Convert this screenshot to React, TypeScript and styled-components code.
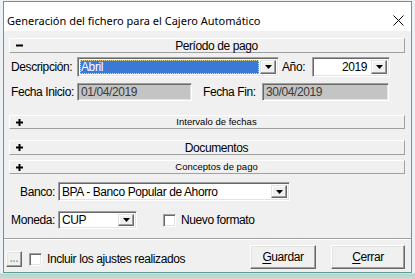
import styled, { createGlobalStyle } from "styled-components";

const ui = `"Liberation Sans", Arial, sans-serif`;

const GlobalStyle = createGlobalStyle`
  body {
    margin: 0;
    background: #eef1f4;
    font-family: ${ui};
  }
`;

const Desktop = styled.div`
  width: 415px;
  height: 279px;
  box-sizing: border-box;
  overflow: hidden;
  padding: 1px 0 0 3px;
  background: linear-gradient(to bottom, #eef1f4 0, #eef1f4 273px, #b8d3c8 274px, #c9ddd5 279px);
`;

const Window = styled.div`
  width: 409px;
  box-sizing: border-box;
  border: 1px solid #5a9c97;
  background: #f0f0f0;
`;

const TitleBar = styled.div`
  height: 29px;
  box-sizing: border-box;
  background: #fff;
  display: flex;
  align-items: center;
  justify-content: space-between;
  padding: 8px 7px 0 3px;
  font-family: "Noto Sans", "Liberation Sans", sans-serif;
  font-size: 11px;
  color: #000;
`;

const Client = styled.div`
  display: flex;
  flex-direction: column;
  padding: 7px 0 3px 0;
  font-size: 12px;
  letter-spacing: -0.4px;
`;

const Bar = styled.div<{ $h: number; $top: number }>`
  height: ${(p) => p.$h}px;
  margin: ${(p) => p.$top}px 6px 0 5px;
  box-sizing: border-box;
  display: flex;
  align-items: center;
  border: 1px solid;
  border-color: #fff #a0a0a0 #a0a0a0 #fff;
`;

const BarIcon = styled.div`
  width: 13px;
  padding-left: 6px;
  display: flex;
  align-items: center;
`;

const BarTitle = styled.div<{ $small?: boolean }>`
  flex: 1;
  text-align: center;
  color: #000;
  font-size: ${(p) => (p.$small ? "9.5px" : "12px")};
  letter-spacing: ${(p) => (p.$small ? "0" : "-0.4px")};
  line-height: 1;
`;

const Row = styled.div<{ $top: number; $h: number }>`
  display: flex;
  align-items: center;
  height: ${(p) => p.$h}px;
  margin-top: ${(p) => p.$top}px;
  padding-left: 7px;
`;

const Label = styled.div<{ $w: number; $right?: boolean; $ml?: number }>`
  width: ${(p) => p.$w}px;
  margin-left: ${(p) => p.$ml ?? 0}px;
  text-align: ${(p) => (p.$right ? "right" : "left")};
  padding-right: ${(p) => (p.$right ? 3 : 0)}px;
  box-sizing: border-box;
  color: #000;
  white-space: nowrap;
`;

const Sunken = styled.div<{ $w: number; $h: number; $bg?: string }>`
  width: ${(p) => p.$w}px;
  height: ${(p) => p.$h}px;
  box-sizing: border-box;
  display: flex;
  align-items: stretch;
  background: ${(p) => p.$bg ?? "#fff"};
  border: 1px solid;
  border-color: #a0a0a0 #fff #fff #a0a0a0;
  box-shadow: inset 1px 1px #696969, inset -1px -1px #e3e3e3;
  padding: 2px;
`;

const Value = styled.div<{ $right?: boolean; $sel?: boolean; $dim?: boolean }>`
  flex: 1;
  display: flex;
  align-items: center;
  justify-content: ${(p) => (p.$right ? "flex-end" : "flex-start")};
  padding: 0 ${(p) => (p.$right ? 4 : 1)}px 0 1px;
  color: ${(p) => (p.$sel ? "#fff" : p.$dim ? "#3a3a3a" : "#000")};
  background: ${(p) => (p.$sel ? "#3b79d6" : "transparent")};
  outline: ${(p) => (p.$sel ? "1px dotted #e8e0a0" : "none")};
  outline-offset: -1px;
  margin-right: ${(p) => (p.$sel ? 1 : 0)}px;
  white-space: nowrap;
  overflow: hidden;
`;

const DropButton = styled.div`
  width: 16px;
  box-sizing: border-box;
  display: flex;
  align-items: center;
  justify-content: center;
  background: #f0f0f0;
  border: 1px solid;
  border-color: #e3e3e3 #696969 #696969 #e3e3e3;
  box-shadow: inset -1px -1px #a0a0a0, inset 1px 1px #fff;
`;

const Check = styled.div<{ $ml: number }>`
  width: 13px;
  height: 13px;
  box-sizing: border-box;
  margin-left: ${(p) => p.$ml}px;
  margin-right: 5px;
  background: #fff;
  border: 1px solid;
  border-color: #a0a0a0 #fff #fff #a0a0a0;
  box-shadow: inset 1px 1px #696969, inset -1px -1px #e3e3e3;
`;

const Text = styled.span`
  color: #000;
  white-space: nowrap;
`;

const Separator = styled.div`
  margin-top: 9px;
  height: 0;
  border-top: 1px solid #a0a0a0;
  border-bottom: 1px solid #fff;
`;

const Footer = styled.div`
  display: flex;
  align-items: flex-end;
  margin-top: 5px;
  padding: 0 6px 0 2px;
  height: 24px;
`;

const Left = styled.div`
  flex: 1;
  display: flex;
  align-items: center;
  margin-bottom: 2px;
`;

const Raised = styled.div<{ $w: number; $h: number; $ml?: number }>`
  width: ${(p) => p.$w}px;
  height: ${(p) => p.$h}px;
  margin-left: ${(p) => p.$ml ?? 0}px;
  box-sizing: border-box;
  display: flex;
  align-items: center;
  justify-content: center;
  background: #f0f0f0;
  border: 1px solid;
  border-color: #fff #696969 #696969 #fff;
  box-shadow: inset -1px -1px #a0a0a0, inset 1px 1px #e3e3e3;
  color: #000;
  u {
    text-decoration: underline;
    text-underline-offset: 2px;
  }
`;

const Dots = styled.span`
  font-size: 10px;
  font-weight: bold;
  color: #9a9a9a;
  letter-spacing: 0;
  margin-top: -2px;
`;

function Arrow() {
  return (
    <svg width="7" height="4" viewBox="0 0 7 4">
      <path d="M0 0H7L3.5 4Z" fill="#000" />
    </svg>
  );
}

function Toggle({ open }: { open?: boolean }) {
  return (
    <svg width="7" height="7" viewBox="0 0 7 7">
      <rect x="0" y="2.5" width="7" height="2" fill="#000" />
      {!open && <rect x="2.5" y="0" width="2" height="7" fill="#000" />}
    </svg>
  );
}

function Combo({ w, h, value, right, sel }: { w: number; h: number; value: string; right?: boolean; sel?: boolean }) {
  return (
    <Sunken $w={w} $h={h}>
      <Value $right={right} $sel={sel}>{value}</Value>
      <DropButton>
        <Arrow />
      </DropButton>
    </Sunken>
  );
}

export default function App() {
  return (
    <>
      <GlobalStyle />
      <Desktop>
        <Window>
          <TitleBar>
            <span>Generación del fichero para el Cajero Automático</span>
            <svg width="11" height="11" viewBox="0 0 11 11">
              <path d="M0.5 0.5L10.5 10.5M10.5 0.5L0.5 10.5" stroke="#000" strokeWidth="1" />
            </svg>
          </TitleBar>
          <Client>
            <Bar $h={15} $top={0}>
              <BarIcon>
                <Toggle open />
              </BarIcon>
              <BarTitle>Período de pago</BarTitle>
            </Bar>

            <Row $top={4} $h={20}>
              <Label $w={66}>Descripción:</Label>
              <Combo w={202} h={20} value="Abril" sel />
              <Label $w={30} $ml={3}>Año:</Label>
              <Combo w={78} h={20} value="2019" right />
            </Row>

            <Row $top={6} $h={18}>
              <Label $w={66}>Fecha Inicio:</Label>
              <Sunken $w={115} $h={18} $bg="#c4c4c4">
                <Value $dim>01/04/2019</Value>
              </Sunken>
              <Label $w={59} $ml={11}>Fecha Fin:</Label>
              <Sunken $w={127} $h={18} $bg="#c4c4c4">
                <Value $dim>30/04/2019</Value>
              </Sunken>
            </Row>

            <Bar $h={14} $top={14}>
              <BarIcon>
                <Toggle />
              </BarIcon>
              <BarTitle $small>Intervalo de fechas</BarTitle>
            </Bar>
            <Bar $h={15} $top={11}>
              <BarIcon>
                <Toggle />
              </BarIcon>
              <BarTitle>Documentos</BarTitle>
            </Bar>
            <Bar $h={14} $top={5}>
              <BarIcon>
                <Toggle />
              </BarIcon>
              <BarTitle $small>Conceptos de pago</BarTitle>
            </Bar>

            <Row $top={8} $h={19}>
              <Label $w={47} $right>Banco:</Label>
              <Combo w={232} h={19} value="BPA - Banco Popular de Ahorro" />
            </Row>

            <Row $top={10} $h={18}>
              <Label $w={47} $right>Moneda:</Label>
              <Combo w={79} h={18} value="CUP" />
              <Check $ml={26} />
              <Text>Nuevo formato</Text>
            </Row>

            <Separator />

            <Footer>
              <Left>
                <Raised $w={16} $h={16}>
                  <Dots>...</Dots>
                </Raised>
                <Check $ml={7} />
                <Text>Incluir los ajustes realizados</Text>
              </Left>
              <Raised $w={66} $h={24}>
                <span>
                  <u>G</u>uardar
                </span>
              </Raised>
              <Raised $w={74} $h={24} $ml={15}>
                <span>
                  <u>C</u>errar
                </span>
              </Raised>
            </Footer>
          </Client>
        </Window>
      </Desktop>
    </>
  );
}
